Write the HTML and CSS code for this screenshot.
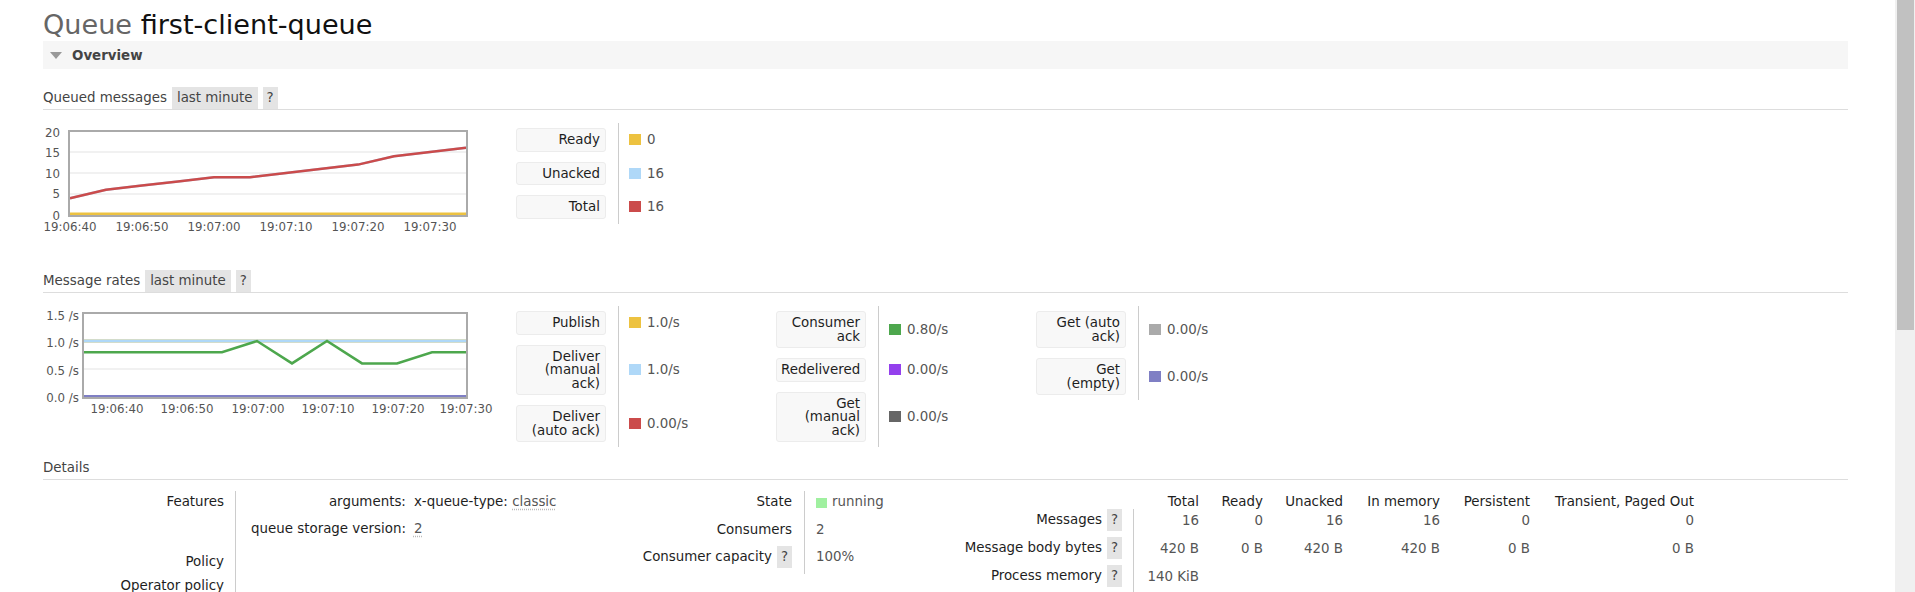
FILE: index.html
```html
<!DOCTYPE html>
<html>
<head>
<meta charset="utf-8">
<title>Queue first-client-queue</title>
<link rel="stylesheet" href="styles.css">
</head>
<body>
<div class="page">
  <h1 class="title"><span class="title-kind">Queue</span> <b class="title-name">first-client-queue</b></h1>
  <div class="section-bar"><span class="tri"></span><span class="bar-label">Overview</span></div>

  <div class="sub-head s1"><span class="sub-label">Queued messages</span><span class="chip">last minute</span><span class="chip q">?</span></div>
  <div class="chart-row">
    <svg class="chart" width="475" height="108" viewBox="-15 0 475 108">
      <rect x="26" y="3" width="398" height="85" fill="#fff"/>
      <g stroke="#ededed" stroke-width="1.5">
        <line x1="27" y1="24" x2="423" y2="24"/>
        <line x1="27" y1="45" x2="423" y2="45"/>
        <line x1="27" y1="66" x2="423" y2="66"/>
      </g>
      <polyline points="27,70.2 63,61.8 99,57.6 135,53.4 171,49.2 207,49.2 243,45 279,40.8 315,36.6 351,28.2 387,24 423,19.8" fill="none" stroke="#afd8f8" stroke-width="2.5"/>
      <polyline points="27,70.2 63,61.8 99,57.6 135,53.4 171,49.2 207,49.2 243,45 279,40.8 315,36.6 351,28.2 387,24 423,19.8" fill="none" stroke="#cb4b4b" stroke-width="2.5" stroke-linejoin="round"/>
      <line x1="27" y1="86" x2="423" y2="86" stroke="#edc240" stroke-width="3"/>
      <rect x="26" y="3" width="398" height="85" fill="none" stroke="#aaa" stroke-width="2"/>
      <g class="ax" text-anchor="end">
        <text x="17" y="9">20</text>
        <text x="17" y="29">15</text>
        <text x="17" y="50">10</text>
        <text x="17" y="70">5</text>
        <text x="17" y="92">0</text>
      </g>
      <g class="ax" text-anchor="middle">
        <text x="27" y="103">19:06:40</text>
        <text x="99" y="103">19:06:50</text>
        <text x="171" y="103">19:07:00</text>
        <text x="243" y="103">19:07:10</text>
        <text x="315" y="103">19:07:20</text>
        <text x="387" y="103">19:07:30</text>
      </g>
    </svg>
    <div class="legend">
      <div class="legend-col">
        <div class="lg-th"><div class="lg-box">Ready</div></div>
        <div class="lg-td"><span class="sw c-yellow"></span>0</div>
        <div class="lg-th"><div class="lg-box">Unacked</div></div>
        <div class="lg-td"><span class="sw c-blue"></span>16</div>
        <div class="lg-th"><div class="lg-box">Total</div></div>
        <div class="lg-td"><span class="sw c-red"></span>16</div>
      </div>
    </div>
  </div>

  <div class="sub-head s2"><span class="sub-label">Message rates</span><span class="chip">last minute</span><span class="chip q">?</span></div>
  <div class="chart-row">
    <svg class="chart" width="475" height="108" viewBox="-15 0 475 108">
      <rect x="40" y="2" width="384" height="85" fill="#fff"/>
      <line x1="41" y1="58" x2="423" y2="58" stroke="#ededed" stroke-width="1.5"/>
      <line x1="41" y1="30" x2="423" y2="30" stroke="#edc240" stroke-width="3"/>
      <line x1="41" y1="30" x2="423" y2="30" stroke="#afd8f8" stroke-width="3"/>
      <line x1="41" y1="85.5" x2="423" y2="85.5" stroke="#cb4b4b" stroke-width="3"/>
      <polyline points="41,41.2 179,41.2 214,30 249,52.4 284,30 319,52.4 354,52.4 389,41.2 423,41.2" fill="none" stroke="#4da74d" stroke-width="2.5" stroke-linejoin="miter"/>
      <line x1="41" y1="85.5" x2="423" y2="85.5" stroke="#7f7fc4" stroke-width="3"/>
      <rect x="40" y="2" width="384" height="85" fill="none" stroke="#aaa" stroke-width="2"/>
      <g class="ax" text-anchor="end">
        <text x="36" y="9">1.5 /s</text>
        <text x="36" y="36">1.0 /s</text>
        <text x="36" y="64">0.5 /s</text>
        <text x="36" y="91">0.0 /s</text>
      </g>
      <g class="ax" text-anchor="middle">
        <text x="74" y="102">19:06:40</text>
        <text x="144" y="102">19:06:50</text>
        <text x="215" y="102">19:07:00</text>
        <text x="285" y="102">19:07:10</text>
        <text x="355" y="102">19:07:20</text>
        <text x="423" y="102">19:07:30</text>
      </g>
    </svg>
    <div class="legend">
      <div class="legend-col">
        <div class="lg-th"><div class="lg-box">Publish</div></div>
        <div class="lg-td"><span class="sw c-yellow"></span>1.0/s</div>
        <div class="lg-th"><div class="lg-box">Deliver<br>(manual<br>ack)</div></div>
        <div class="lg-td"><span class="sw c-blue"></span>1.0/s</div>
        <div class="lg-th"><div class="lg-box">Deliver<br>(auto ack)</div></div>
        <div class="lg-td"><span class="sw c-red"></span>0.00/s</div>
      </div>
      <div class="legend-col">
        <div class="lg-th"><div class="lg-box">Consumer<br>ack</div></div>
        <div class="lg-td"><span class="sw c-green"></span>0.80/s</div>
        <div class="lg-th"><div class="lg-box">Redelivered</div></div>
        <div class="lg-td"><span class="sw c-purple"></span>0.00/s</div>
        <div class="lg-th"><div class="lg-box">Get<br>(manual<br>ack)</div></div>
        <div class="lg-td"><span class="sw c-dark"></span>0.00/s</div>
      </div>
      <div class="legend-col">
        <div class="lg-th"><div class="lg-box">Get (auto<br>ack)</div></div>
        <div class="lg-td"><span class="sw c-grey"></span>0.00/s</div>
        <div class="lg-th"><div class="lg-box">Get<br>(empty)</div></div>
        <div class="lg-td"><span class="sw c-lav"></span>0.00/s</div>
      </div>
    </div>
  </div>

  <div class="sub-head s3"><span class="sub-label">Details</span></div>
  <div class="details">
    <div class="facts-a">
      <div class="f-th">Features</div>
      <div class="f-td">
        <div class="kv">
          <span class="k">arguments:</span><span class="v">x-queue-type: <abbr class="val">classic</abbr></span>
          <span class="k">queue storage version:</span><span class="v"><abbr class="val">2</abbr></span>
        </div>
      </div>
      <div class="f-th">Policy</div><div class="f-td"></div>
      <div class="f-th">Operator policy</div><div class="f-td"></div>
    </div>
    <div class="facts-b">
      <div class="f-th">State</div><div class="f-td"><span class="sw c-run"></span>running</div>
      <div class="f-th">Consumers</div><div class="f-td">2</div>
      <div class="f-th">Consumer capacity <span class="chip q">?</span></div><div class="f-td">100%</div>
    </div>
    <div class="msg-table">
      <div></div>
      <div class="mh">Total</div>
      <div class="mh">Ready</div>
      <div class="mh">Unacked</div>
      <div class="mh">In memory</div>
      <div class="mh">Persistent</div>
      <div class="mh">Transient, Paged Out</div>

      <div class="ml">Messages <span class="chip q">?</span></div>
      <div class="mv first">16</div>
      <div class="mv">0</div>
      <div class="mv">16</div>
      <div class="mv">16</div>
      <div class="mv">0</div>
      <div class="mv">0</div>

      <div class="ml">Message body bytes <span class="chip q">?</span></div>
      <div class="mv first">420 B</div>
      <div class="mv">0 B</div>
      <div class="mv">420 B</div>
      <div class="mv">420 B</div>
      <div class="mv">0 B</div>
      <div class="mv">0 B</div>

      <div class="ml">Process memory <span class="chip q">?</span></div>
      <div class="mv first">140 KiB</div>
    </div>
  </div>
</div>
<div class="scrollbar"><div class="thumb"></div></div>
</body>
</html>
```
FILE: styles.css
```css
html, body {
  margin: 0;
  padding: 0;
  overflow: hidden;
  background: #fff;
}
body {
  font-family: "DejaVu Sans", Verdana, sans-serif;
  font-size: 13.4px;
  color: #484848;
}
.page {
  margin-left: 43px;
  width: 1805px;
}
.title {
  margin: 0;
  height: 41px;
  box-sizing: border-box;
  padding-top: 7px;
  font-size: 27.1px;
  line-height: 35px;
  font-weight: normal;
  color: #666;
  white-space: nowrap;
}
.title-name {
  font-weight: normal;
  color: #111;
}
.section-bar {
  height: 28px;
  background: #f6f6f6;
  display: flex;
  align-items: center;
  padding-left: 7px;
}
.tri {
  width: 0;
  height: 0;
  border-left: 6px solid transparent;
  border-right: 6px solid transparent;
  border-top: 7px solid #999;
  margin-right: 10px;
}
.bar-label {
  font-weight: bold;
  color: #444;
}
.sub-head {
  display: flex;
  gap: 5px;
  height: 22px;
  line-height: 22px;
  border-bottom: 1px solid #ddd;
  color: #444;
}
.s1 { margin-top: 18px; }
.s2 { margin-top: 34px; }
.s3 { margin-top: 10px; }
.chip {
  background: #e4e4e4;
  padding: 0 5px;
  color: #444;
  line-height: 22px;
}
.chip.q {
  padding: 0 4px;
}
.chart-row {
  display: flex;
  align-items: flex-start;
  padding-top: 13px;
}
.chart {
  display: block;
  flex: none;
  margin-top: 5px;
  margin-left: -15px;
  overflow: visible;
}
.ax {
  font-family: "DejaVu Sans", Verdana, sans-serif;
  font-size: 11.8px;
  fill: #545454;
}
.legend {
  display: flex;
  margin-left: 13px;
}
.legend-col {
  width: 260px;
  display: grid;
  grid-template-columns: 90px 1fr;
  align-content: start;
}
.lg-th {
  padding: 5px 0;
}
.lg-box {
  width: 90px;
  box-sizing: border-box;
  background: #f8f8f8;
  border: 1px solid #ececec;
  border-radius: 3px;
  padding: 4px 5px 4px 4px;
  text-align: right;
  line-height: 13.5px;
  color: #1e1e1e;
}
.lg-td {
  margin-left: 12px;
  border-left: 1px solid #ccc;
  padding-left: 10px;
  display: flex;
  align-items: center;
  color: #555;
}
.sw {
  display: inline-block;
  width: 12px;
  height: 11px;
  margin-right: 6px;
  flex: none;
}
.c-yellow { background: #edc240; }
.c-blue { background: #afd8f8; }
.c-red { background: #cb4b4b; }
.c-green { background: #4da74d; }
.c-purple { background: #9440ed; }
.c-dark { background: #666; }
.c-grey { background: #aaa; }
.c-lav { background: #7f7fc4; }
.c-run {
  background: #a0f0a0;
  width: 11px;
  height: 10px;
  margin-top: 7px;
  margin-right: 5px;
}
.details {
  display: flex;
  align-items: flex-start;
  padding-top: 11px;
  line-height: 22px;
}
.f-th {
  text-align: right;
  color: #1e1e1e;
  white-space: nowrap;
}
.f-td {
  border-left: 1px solid #ccc;
  color: #555;
}
.facts-a {
  width: 577px;
  flex: none;
  display: grid;
  grid-template-columns: 181px 1fr;
  grid-template-rows: 60px 24px 24px;
  column-gap: 11px;
}
.facts-a .f-td {
  padding-left: 15px;
}
.kv {
  display: grid;
  grid-template-columns: auto auto;
  justify-content: start;
  column-gap: 8px;
  grid-auto-rows: 27px;
}
.kv .k {
  text-align: right;
  color: #1e1e1e;
  white-space: nowrap;
}
.kv .v {
  color: #1e1e1e;
  white-space: nowrap;
}
.val {
  color: #555;
  text-decoration: underline dotted #bbb;
  text-underline-offset: 3px;
}
.facts-b {
  width: 280px;
  flex: none;
  display: grid;
  grid-template-columns: 172px 1fr;
  grid-auto-rows: 27.5px;
  column-gap: 12px;
}
.facts-b .f-th {
  display: flex;
  justify-content: flex-end;
  align-items: flex-start;
  gap: 5px;
}
.facts-b .f-td {
  padding-left: 11px;
  display: flex;
  align-items: flex-start;
}
.msg-table {
  flex: none;
  margin-top: 2px;
  display: grid;
  grid-template-columns: 233px 66px 64px 80px 97px 90px 164px;
  grid-template-rows: 16px 28px 28px 28px;
}
.mh {
  text-align: right;
  line-height: 18px;
  color: #1e1e1e;
  white-space: nowrap;
}
.ml {
  display: flex;
  justify-content: flex-end;
  align-items: flex-start;
  gap: 5px;
  padding-right: 11px;
  color: #1e1e1e;
  white-space: nowrap;
}
.mv {
  text-align: right;
  padding-top: 1px;
  color: #555;
  white-space: nowrap;
}
.mv.first {
  border-left: 1px solid #ccc;
}
.scrollbar {
  position: fixed;
  top: 0;
  right: 0;
  width: 20px;
  height: 100%;
  background: #f0f0f0;
}
.thumb {
  position: absolute;
  left: 2px;
  top: 0;
  width: 17px;
  height: 330px;
  background: #c1c1c1;
}
```
